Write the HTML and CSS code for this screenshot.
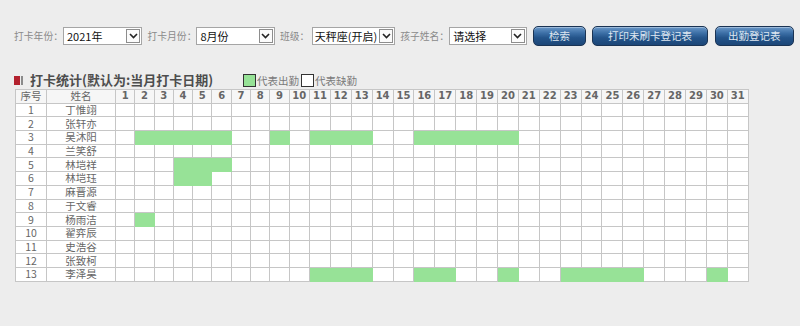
FILE: index.html
```html
<!DOCTYPE html>
<html lang="zh-CN">
<head>
<meta charset="utf-8">
<title>打卡统计</title>
<link rel="stylesheet" href="styles.css">
</head>
<body>
<div class="toolbar">
  <span class="label">打卡年份：</span>
  <div class="select s-year"><span class="sel-text">2021年</span><span class="arrow"><svg width="9" height="6" viewBox="0 0 9 6"><path d="M1 1 L4.5 4.5 L8 1" fill="none" stroke="#222" stroke-width="1.6"/></svg></span></div>
  <span class="label">打卡月份：</span>
  <div class="select s-month"><span class="sel-text">8月份</span><span class="arrow"><svg width="9" height="6" viewBox="0 0 9 6"><path d="M1 1 L4.5 4.5 L8 1" fill="none" stroke="#222" stroke-width="1.6"/></svg></span></div>
  <span class="label l-short">班级：</span>
  <div class="select s-class"><span class="sel-text">天秤座(开启)</span><span class="arrow"><svg width="9" height="6" viewBox="0 0 9 6"><path d="M1 1 L4.5 4.5 L8 1" fill="none" stroke="#222" stroke-width="1.6"/></svg></span></div>
  <span class="label">孩子姓名：</span>
  <div class="select s-child"><span class="sel-text">请选择</span><span class="arrow"><svg width="9" height="6" viewBox="0 0 9 6"><path d="M1 1 L4.5 4.5 L8 1" fill="none" stroke="#222" stroke-width="1.6"/></svg></span></div>
  <button class="btn b-search">检索</button>
  <button class="btn b-print">打印未刷卡登记表</button>
  <button class="btn b-attend">出勤登记表</button>
</div>

<div class="title-row">
  <span class="title-icon"><span class="ti-red"></span><span class="ti-gray"></span></span>
  <h2 class="title">打卡统计(默认为:当月打卡日期)</h2>
  <span class="legend"><span class="box box-on"></span>代表出勤<span class="box box-off"></span>代表缺勤</span>
</div>

<table class="grid">
  <colgroup>
    <col class="c-no"><col class="c-name">
    <col class="c-d1"><col class="c-d1"><col class="c-d1"><col class="c-d1"><col class="c-d1"><col class="c-d1"><col class="c-d1"><col class="c-d1"><col class="c-d1">
    <col class="c-d10">
    <col class="c-d2"><col class="c-d2"><col class="c-d2"><col class="c-d2"><col class="c-d2"><col class="c-d2"><col class="c-d2"><col class="c-d2"><col class="c-d2"><col class="c-d2"><col class="c-d2"><col class="c-d2"><col class="c-d2"><col class="c-d2"><col class="c-d2"><col class="c-d2"><col class="c-d2"><col class="c-d2"><col class="c-d2"><col class="c-d2"><col class="c-d2">
  </colgroup>
  <thead>
    <tr>
      <th class="h-txt">序号</th><th class="h-txt">姓名</th>
      <th>1</th><th>2</th><th>3</th><th>4</th><th>5</th><th>6</th><th>7</th><th>8</th><th>9</th><th>10</th>
      <th>11</th><th>12</th><th>13</th><th>14</th><th>15</th><th>16</th><th>17</th><th>18</th><th>19</th><th>20</th>
      <th>21</th><th>22</th><th>23</th><th>24</th><th>25</th><th>26</th><th>27</th><th>28</th><th>29</th><th>30</th><th>31</th>
    </tr>
  </thead>
  <tbody>
    <tr><td>1</td><td>丁惟翊</td><td></td><td></td><td></td><td></td><td></td><td></td><td></td><td></td><td></td><td></td><td></td><td></td><td></td><td></td><td></td><td></td><td></td><td></td><td></td><td></td><td></td><td></td><td></td><td></td><td></td><td></td><td></td><td></td><td></td><td></td><td></td></tr>
    <tr><td>2</td><td>张轩亦</td><td></td><td></td><td></td><td></td><td></td><td></td><td></td><td></td><td></td><td></td><td></td><td></td><td></td><td></td><td></td><td></td><td></td><td></td><td></td><td></td><td></td><td></td><td></td><td></td><td></td><td></td><td></td><td></td><td></td><td></td><td></td></tr>
    <tr><td>3</td><td>吴沐阳</td><td></td><td class="on"></td><td class="on"></td><td class="on"></td><td class="on"></td><td class="on"></td><td></td><td></td><td class="on"></td><td></td><td class="on"></td><td class="on"></td><td class="on"></td><td></td><td></td><td class="on"></td><td class="on"></td><td class="on"></td><td class="on"></td><td class="on"></td><td></td><td></td><td></td><td></td><td></td><td></td><td></td><td></td><td></td><td></td><td></td></tr>
    <tr><td>4</td><td>兰笑舒</td><td></td><td></td><td></td><td></td><td></td><td></td><td></td><td></td><td></td><td></td><td></td><td></td><td></td><td></td><td></td><td></td><td></td><td></td><td></td><td></td><td></td><td></td><td></td><td></td><td></td><td></td><td></td><td></td><td></td><td></td><td></td></tr>
    <tr><td>5</td><td>林垲祥</td><td></td><td></td><td></td><td class="on"></td><td class="on"></td><td class="on"></td><td></td><td></td><td></td><td></td><td></td><td></td><td></td><td></td><td></td><td></td><td></td><td></td><td></td><td></td><td></td><td></td><td></td><td></td><td></td><td></td><td></td><td></td><td></td><td></td><td></td></tr>
    <tr><td>6</td><td>林垲珏</td><td></td><td></td><td></td><td class="on"></td><td class="on"></td><td></td><td></td><td></td><td></td><td></td><td></td><td></td><td></td><td></td><td></td><td></td><td></td><td></td><td></td><td></td><td></td><td></td><td></td><td></td><td></td><td></td><td></td><td></td><td></td><td></td><td></td></tr>
    <tr><td>7</td><td>麻晋源</td><td></td><td></td><td></td><td></td><td></td><td></td><td></td><td></td><td></td><td></td><td></td><td></td><td></td><td></td><td></td><td></td><td></td><td></td><td></td><td></td><td></td><td></td><td></td><td></td><td></td><td></td><td></td><td></td><td></td><td></td><td></td></tr>
    <tr><td>8</td><td>于文睿</td><td></td><td></td><td></td><td></td><td></td><td></td><td></td><td></td><td></td><td></td><td></td><td></td><td></td><td></td><td></td><td></td><td></td><td></td><td></td><td></td><td></td><td></td><td></td><td></td><td></td><td></td><td></td><td></td><td></td><td></td><td></td></tr>
    <tr><td>9</td><td>杨雨洁</td><td></td><td class="on"></td><td></td><td></td><td></td><td></td><td></td><td></td><td></td><td></td><td></td><td></td><td></td><td></td><td></td><td></td><td></td><td></td><td></td><td></td><td></td><td></td><td></td><td></td><td></td><td></td><td></td><td></td><td></td><td></td><td></td></tr>
    <tr><td>10</td><td>翟弈辰</td><td></td><td></td><td></td><td></td><td></td><td></td><td></td><td></td><td></td><td></td><td></td><td></td><td></td><td></td><td></td><td></td><td></td><td></td><td></td><td></td><td></td><td></td><td></td><td></td><td></td><td></td><td></td><td></td><td></td><td></td><td></td></tr>
    <tr><td>11</td><td>史浩谷</td><td></td><td></td><td></td><td></td><td></td><td></td><td></td><td></td><td></td><td></td><td></td><td></td><td></td><td></td><td></td><td></td><td></td><td></td><td></td><td></td><td></td><td></td><td></td><td></td><td></td><td></td><td></td><td></td><td></td><td></td><td></td></tr>
    <tr><td>12</td><td>张致柯</td><td></td><td></td><td></td><td></td><td></td><td></td><td></td><td></td><td></td><td></td><td></td><td></td><td></td><td></td><td></td><td></td><td></td><td></td><td></td><td></td><td></td><td></td><td></td><td></td><td></td><td></td><td></td><td></td><td></td><td></td><td></td></tr>
    <tr><td>13</td><td>李泽昊</td><td></td><td></td><td></td><td></td><td></td><td></td><td></td><td></td><td></td><td></td><td class="on"></td><td class="on"></td><td class="on"></td><td></td><td></td><td class="on"></td><td class="on"></td><td></td><td></td><td class="on"></td><td></td><td></td><td class="on"></td><td class="on"></td><td class="on"></td><td class="on"></td><td></td><td></td><td></td><td class="on"></td><td></td></tr>
  </tbody>
</table>
</body>
</html>
```

FILE: styles.css
```css
html, body {
  margin: 0;
  padding: 0;
  background: #ededed;
  font-family: "Noto Sans CJK SC", "Noto Sans", sans-serif;
}

.toolbar {
  display: flex;
  align-items: center;
  height: 20px;
  padding: 26px 0 0 14px;
}

.label {
  width: 49px;
  font-size: 9.8px;
  color: #8a8a8a;
  white-space: nowrap;
  line-height: 18px;
}
.l-short { width: 32px; }

.select {
  display: flex;
  align-items: center;
  justify-content: space-between;
  box-sizing: border-box;
  height: 18px;
  background: #fff;
  border: 1px solid #a5a5a5;
  margin-right: 5px;
  padding: 0 1px 0 3px;
}
.s-year { width: 80px; }
.s-month { width: 79px; }
.s-class { width: 84px; padding-left: 2px; }
.s-child { width: 78px; margin-right: 6px; }

.sel-text {
  font-size: 11px;
  color: #111;
  white-space: nowrap;
  line-height: 16px;
}

.arrow {
  display: flex;
  align-items: center;
  justify-content: center;
  box-sizing: border-box;
  width: 14px;
  height: 14px;
  border: 1px solid #8d8d8d;
  background: #fbfbfb;
  flex: none;
}

.btn {
  box-sizing: border-box;
  height: 20px;
  margin: 0 6px 0 0;
  padding: 0;
  border: 1px solid #1b3454;
  border-radius: 5px;
  background: linear-gradient(#6a98c9 0%, #3b6ea5 35%, #24548a 60%, #1c4677 100%);
  box-shadow: inset 0 1px 0 rgba(255,255,255,0.35);
  color: #dfe7f1;
  font-family: "Noto Sans CJK SC", sans-serif;
  font-size: 10.5px;
  line-height: 18px;
  cursor: pointer;
}
.b-search { width: 54px; }
.b-print { width: 116px; margin-right: 7px; }
.b-attend { width: 80px; }

.title-row {
  display: flex;
  align-items: center;
  height: 18px;
  margin: 25px 0 0 14px;
}

.title-icon {
  display: flex;
  gap: 1px;
  margin-right: 7px;
}
.ti-red {
  width: 6px;
  height: 9px;
  background: #b3212e;
}
.ti-gray {
  width: 2px;
  height: 9px;
  background: #8a8a8a;
}

.title {
  margin: 0;
  font-size: 13px;
  font-weight: bold;
  color: #4d4d4d;
  line-height: 18px;
  white-space: nowrap;
}

.legend {
  display: flex;
  align-items: center;
  margin-left: 30px;
  font-size: 10.5px;
  color: #7a7a7a;
  white-space: nowrap;
}
.box {
  box-sizing: border-box;
  width: 13px;
  height: 13px;
  border: 1px solid #333;
  margin-right: 1px;
}
.box-on { background: #96e296; }
.box-off { background: #fff; margin-left: 2px; }

.grid {
  margin: 0 0 0 15px;
  border-collapse: collapse;
  table-layout: fixed;
  width: 733px;
  background: #fff;
}
.c-no { width: 31px; }
.c-name { width: 69px; }
.c-d1 { width: 19.3px; }
.c-d10 { width: 20.3px; }
.c-d2 { width: 20.9px; }

.grid th, .grid td {
  border: 1px solid #c6c6c6;
  padding: 0;
  height: 12.7px;
  line-height: 12px;
  text-align: center;
  color: #666;
  overflow: hidden;
  white-space: nowrap;
}
.grid th {
  background: #f6f6f6;
  font-family: "DejaVu Sans", sans-serif;
  font-weight: bold;
  font-size: 10px;
  color: #666;
}
.grid th.h-txt {
  font-family: "Noto Sans CJK SC", sans-serif;
  font-weight: normal;
  font-size: 10.5px;
}
.grid td {
  font-size: 10.5px;
}
.grid td.on {
  background: #97e297;
  border-color: #97e297;
}
```
